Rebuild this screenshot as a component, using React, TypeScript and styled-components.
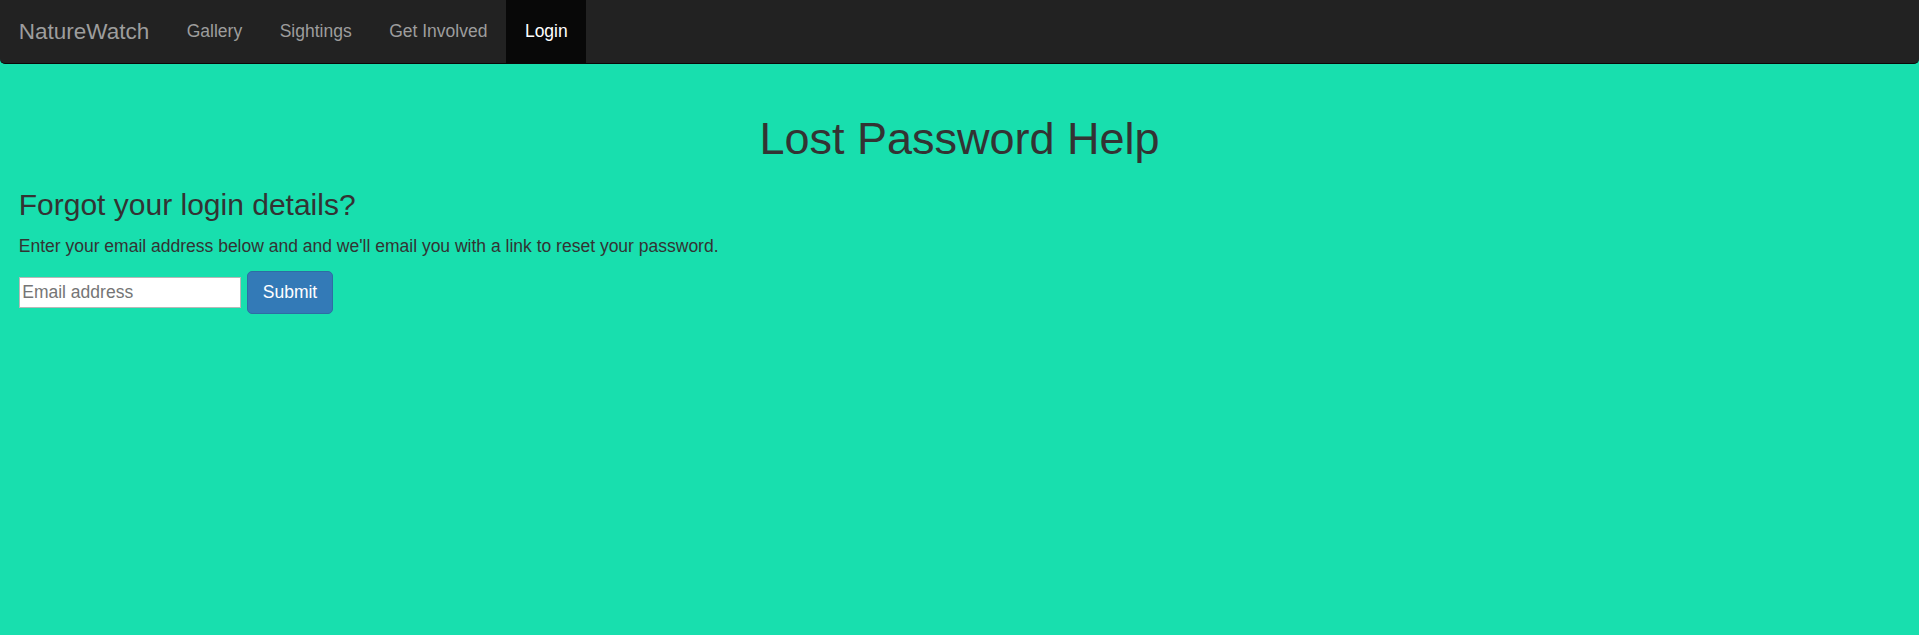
import styled, { createGlobalStyle } from "styled-components";

const GlobalStyle = createGlobalStyle`
  html, body {
    margin: 0;
    padding: 0;
    background-color: #18dfae;
  }

  body {
    font-family: "Liberation Sans", Arial, Helvetica, sans-serif;
    font-size: 17.5px;
    line-height: 25px;
    color: #333;
  }

  * {
    box-sizing: border-box;
  }
`;

const NAV_LINKS = ["Gallery", "Sightings", "Get Involved", "Login"];

const Page = styled.div`
  min-height: 100vh;
  background-color: #18dfae;
`;

const Navbar = styled.nav`
  display: flex;
  align-items: stretch;
  height: 63.5px;
  margin-bottom: 25px;
  background-color: #222;
  border-bottom: 1px solid #080808;
  border-radius: 0 0 5px 5px;
`;

const Brand = styled.a`
  display: flex;
  align-items: center;
  padding: 0 18.75px;
  font-size: 22.5px;
  line-height: 25px;
  color: #9d9d9d;
  text-decoration: none;
`;

const NavList = styled.ul`
  display: flex;
  margin: 0;
  padding: 0;
  list-style: none;
`;

const NavLink = styled.a<{ $active?: boolean }>`
  display: flex;
  align-items: center;
  height: 100%;
  padding: 0 18.75px;
  font-size: 17.5px;
  color: ${(p) => (p.$active ? "#fff" : "#9d9d9d")};
  background-color: ${(p) => (p.$active ? "#080808" : "transparent")};
  text-decoration: none;
`;

const Container = styled.main`
  display: flow-root;
  padding: 0 18.75px;
`;

const Title = styled.h1`
  margin: 25px 0 12.5px;
  font-size: 45px;
  font-weight: 500;
  line-height: 1.1;
  text-align: center;
`;

const Subtitle = styled.h3`
  margin: 25px 0 12.5px;
  font-size: 30px;
  font-weight: 500;
  line-height: 1.1;
`;

const Intro = styled.p`
  margin: 0 0 12.5px;
`;

const ResetForm = styled.form`
  display: flex;
  align-items: center;
  column-gap: 6px;
`;

const EmailInput = styled.input`
  width: 222px;
  height: 31.5px;
  padding: 1px 2.5px;
  border: 1px solid #b8b8b8;
  background: #fff;
  font-family: "Liberation Sans", Arial, sans-serif;
  font-size: 17.5px;
  color: #333;

  &::placeholder {
    color: #757575;
  }
`;

const SubmitButton = styled.button`
  height: 42.5px;
  padding: 0 15px;
  border: 1.25px solid #2e6da4;
  border-radius: 5px;
  background-color: #337ab7;
  color: #fff;
  font-family: "Liberation Sans", Arial, sans-serif;
  font-size: 17.5px;
  line-height: 25px;
  cursor: pointer;
`;

export default function App() {
  return (
    <Page>
      <GlobalStyle />
      <Navbar>
        <Brand href="#">NatureWatch</Brand>
        <NavList>
          {NAV_LINKS.map((label) => (
            <li key={label}>
              <NavLink href="#" $active={label === "Login"}>
                {label}
              </NavLink>
            </li>
          ))}
        </NavList>
      </Navbar>
      <Container>
        <Title>Lost Password Help</Title>
        <Subtitle>Forgot your login details?</Subtitle>
        <Intro>
          Enter your email address below and and we'll email you with a link to
          reset your password.
        </Intro>
        <ResetForm onSubmit={(e) => e.preventDefault()}>
          <EmailInput type="email" placeholder="Email address" />
          <SubmitButton type="submit">Submit</SubmitButton>
        </ResetForm>
      </Container>
    </Page>
  );
}
